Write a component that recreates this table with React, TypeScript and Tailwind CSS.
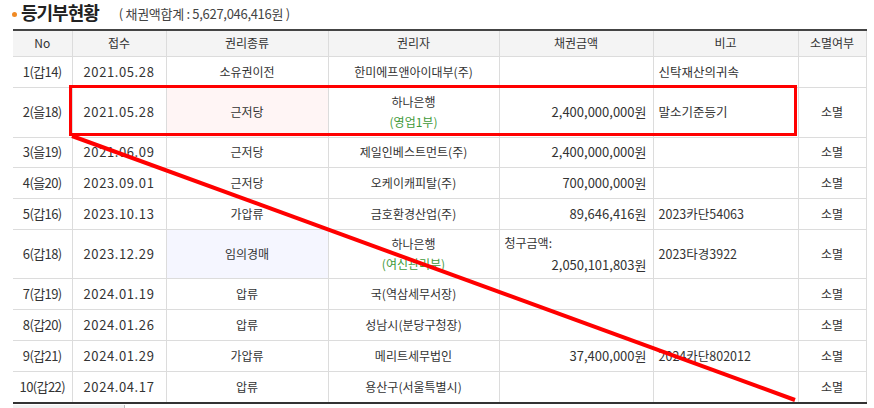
import React from "react";

type Row = {
  no: string;
  date: string;
  kind: string;
  kindBg?: string;
  holder: string;
  holderSub?: string;
  amount?: string;
  claim?: boolean;
  note?: string;
  gone: string;
  h: string;
};

const rows: Row[] = [
  { no: "1(갑14)", date: "2021.05.28", kind: "소유권이전", holder: "한미에프앤아이대부(주)", note: "신탁재산의귀속", gone: "", h: "h-[31px]" },
  { no: "2(을18)", date: "2021.05.28", kind: "근저당", kindBg: "bg-[#fff5f5]", holder: "하나은행", holderSub: "(영업1부)", amount: "2,400,000,000원", note: "말소기준등기", gone: "소멸", h: "h-[50px]" },
  { no: "3(을19)", date: "2021.06.09", kind: "근저당", holder: "제일인베스트먼트(주)", amount: "2,400,000,000원", gone: "소멸", h: "h-[30px]" },
  { no: "4(을20)", date: "2023.09.01", kind: "근저당", holder: "오케이캐피탈(주)", amount: "700,000,000원", gone: "소멸", h: "h-[31px]" },
  { no: "5(갑16)", date: "2023.10.13", kind: "가압류", holder: "금호환경산업(주)", amount: "89,646,416원", note: "2023카단54063", gone: "소멸", h: "h-[31px]" },
  { no: "6(갑18)", date: "2023.12.29", kind: "임의경매", kindBg: "bg-[#f5f6ff]", holder: "하나은행", holderSub: "(여신관리부)", amount: "2,050,101,803원", claim: true, note: "2023타경3922", gone: "소멸", h: "h-[49px]" },
  { no: "7(갑19)", date: "2024.01.19", kind: "압류", holder: "국(역삼세무서장)", gone: "소멸", h: "h-[31px]" },
  { no: "8(갑20)", date: "2024.01.26", kind: "압류", holder: "성남시(분당구청장)", gone: "소멸", h: "h-[31px]" },
  { no: "9(갑21)", date: "2024.01.29", kind: "가압류", holder: "메리트세무법인", amount: "37,400,000원", note: "2024카단802012", gone: "소멸", h: "h-[31px]" },
  { no: "10(갑22)", date: "2024.04.17", kind: "압류", holder: "용산구(서울특별시)", gone: "소멸", h: "h-[32px]" },
];

const cell = "border-b border-r border-[#dcdcdc] align-middle";

export default function App() {
  return (
    <div
      className="relative w-[874px] h-[408px] overflow-hidden bg-white text-[#333]"
      style={{ fontFamily: '"Noto Sans CJK KR", "Open Sans", sans-serif' }}
    >
      <div className="flex items-center h-[29px] pl-[12px] pb-[4px]">
        <span className="w-[5px] h-[5px] rounded-full bg-[#f08a24] mr-[4px] mt-[3px]" />
        <span className="text-[18px] font-bold text-[#222] tracking-[-1px]">등기부현황</span>
        <span className="ml-[20px] text-[13px] text-[#444] mt-[3px] tracking-[-0.3px]">( 채권액합계 : 5,627,046,416원 )</span>
      </div>

      <div className="pl-[13px]">
        <table className="table-fixed border-collapse w-[853px] text-[13px] leading-[18px]">
          <colgroup>
            <col className="w-[59px]" />
            <col className="w-[94px]" />
            <col className="w-[162px]" />
            <col className="w-[171px]" />
            <col className="w-[154px]" />
            <col className="w-[145px]" />
            <col className="w-[68px]" />
          </colgroup>
          <thead>
            <tr className="h-[26px] bg-[#f4f4f4] border-t-2 border-[#444] text-[12px]">
              {["No", "접수", "권리종류", "권리자", "채권금액", "비고", "소멸여부"].map((t) => (
                <th key={t} className={`${cell} font-normal text-center`}>
                  {t}
                </th>
              ))}
            </tr>
          </thead>
          <tbody>
            {rows.map((r, i) => (
              <tr key={r.no} className={`${r.h} ${i === rows.length - 1 ? "border-b-2 border-[#333]" : ""}`}>
                <td className={`${cell} text-center tracking-[-0.6px]`}>{r.no}</td>
                <td className={`${cell} text-center tracking-[0.6px]`}>{r.date}</td>
                <td className={`${cell} text-center text-[12px] ${r.kindBg ?? ""}`}>{r.kind}</td>
                <td className={`${cell} text-center text-[12px]`}>
                  <div>{r.holder}</div>
                  {r.holderSub && <div className="text-[#3f9a3a] mt-[2px]">{r.holderSub}</div>}
                </td>
                <td className={`${cell} text-right pr-[6px]`}>
                  {r.claim ? (
                    <div className="flex flex-col">
                      <span className="text-left pl-[5px] text-[12px]">청구금액:</span>
                      <span className="mt-[4px]">{r.amount}</span>
                    </div>
                  ) : (
                    r.amount
                  )}
                </td>
                <td className={`${cell} text-left pl-[5px] text-[12.5px]`}>{r.note}</td>
                <td className={`${cell} text-center text-[12px]`}>{r.gone}</td>
              </tr>
            ))}
          </tbody>
        </table>
        <div className="mt-[1px] w-[112px] h-[20px] bg-[#f2f2f2] border-r border-[#bbb]" />
      </div>

      {/* red markup over the table */}
      <div className="absolute left-[69px] top-[85px] w-[728px] h-[51px] border-[3px] border-[#ff0000]" />
      <svg className="absolute left-0 top-0" width="874" height="408">
        <line x1="72" y1="136" x2="795" y2="400" stroke="#ff0000" strokeWidth="4" />
      </svg>
    </div>
  );
}
